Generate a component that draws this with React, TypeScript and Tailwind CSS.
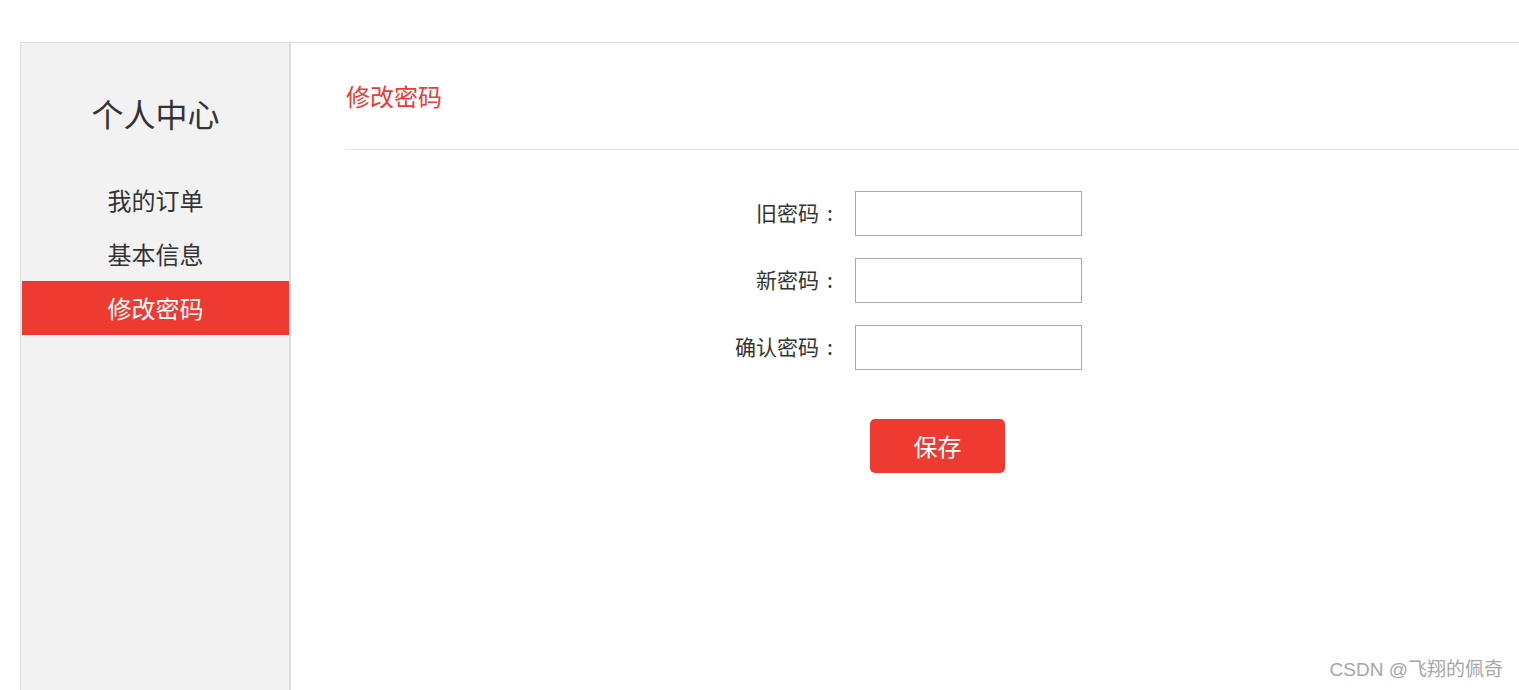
import React from 'react';

const FONT = '"Microsoft YaHei", "Noto Sans CJK SC", "Liberation Sans", sans-serif';

const menu = [
  { label: '我的订单', active: false },
  { label: '基本信息', active: false },
  { label: '修改密码', active: true },
];

const fields = ['旧密码', '新密码', '确认密码'];

const App: React.FC = () => {
  return (
    <div className="relative h-[690px] overflow-hidden bg-white" style={{ fontFamily: FONT }}>
      <div className="pt-[42px] pl-[20px]">
        <div className="flex h-[700px] border-t border-l border-[#dddddd]">
          {/* sidebar */}
          <aside className="w-[270px] shrink-0 bg-[#f2f2f2] border-r-2 border-[#dddddd] pl-px">
            <h2 className="pt-[46px] h-[130px] text-center text-[32px] leading-[48px] text-[#333333]">
              个人中心
            </h2>
            <ul>
              {menu.map((item) => (
                <li
                  key={item.label}
                  className={`h-[54px] flex items-center justify-center text-[24px] pb-px ${
                    item.active ? 'bg-[#ef3a32] text-white' : 'text-[#333333]'
                  }`}
                >
                  {item.label}
                </li>
              ))}
            </ul>
          </aside>

          {/* main */}
          <main className="flex-1 pl-[54px]">
            <div className="pt-[35px] pb-[35px] pl-px border-b border-[#e5e5e5]">
              <h3 className="text-[24px] leading-[36px] text-[#ef3a32]">修改密码</h3>
            </div>

            <form className="pt-[41px] pl-[292px] flex flex-col gap-[22px]">
              {fields.map((f) => (
                <div key={f} className="flex items-center">
                  <label className="w-[218px] text-right text-[21px] leading-[28px] text-[#333333] pr-[14px] pb-[4px]">
                    {f}
                    <span className="inline-block w-[22px] text-center">:</span>
                  </label>
                  <input
                    type="password"
                    className="w-[227px] h-[45px] border border-[#a9a9a9] outline-none"
                  />
                </div>
              ))}
              <div className="pt-[27px] pl-[233px]">
                <button
                  type="button"
                  className="w-[135px] h-[54px] rounded-[5px] bg-[#ef3a32] text-white text-[24px]"
                >
                  保存
                </button>
              </div>
            </form>
          </main>
        </div>
      </div>

      <div
        className="absolute right-[16px] bottom-[6px] text-[19px] text-[#a6a6a6] [text-shadow:0_0_1px_#ffffff]"
        style={{ fontFamily: '"Liberation Sans", "Noto Sans CJK SC", sans-serif' }}
      >
        CSDN @飞翔的佩奇
      </div>
    </div>
  );
};

export default App;
